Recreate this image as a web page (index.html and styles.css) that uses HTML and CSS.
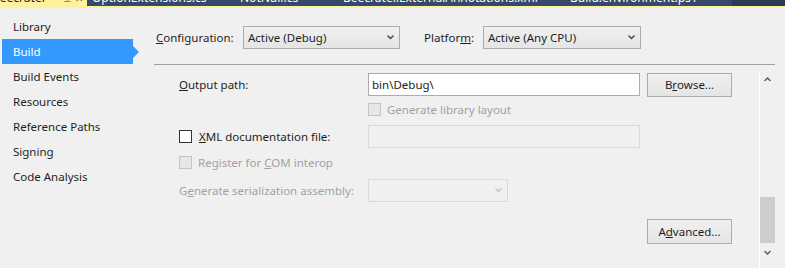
FILE: index.html
```html
<!DOCTYPE html>
<html>
<head>
<meta charset="utf-8">
<link rel="stylesheet" href="styles.css">
</head>
<body>
<div class="tabstrip">
  <div class="tabs">
    <div class="tab tab-active"><span class="tab-title">Beecrater</span><span class="tab-icons">&#x22A5; &#x2715;</span></div>
    <div class="tab tab-2">OptionExtensions.cs</div>
    <div class="tab tab-3">NotNull.cs</div>
    <div class="tab tab-4">Beecrater.ExternalAnnotations.xml</div>
    <div class="tab tab-5">Build.environment.ps1</div>
    <div class="tab tab-rest"></div>
  </div>
</div>
<div class="main">
  <nav class="nav">
    <div class="nav-item">Library</div>
    <div class="nav-item active">Build</div>
    <div class="nav-item">Build Events</div>
    <div class="nav-item">Resources</div>
    <div class="nav-item">Reference Paths</div>
    <div class="nav-item">Signing</div>
    <div class="nav-item">Code Analysis</div>
  </nav>
  <section class="content">
    <div class="config-row">
      <span class="config-label"><u>C</u>onfiguration:</span>
      <div class="combo combo-config"><span>Active (Debug)</span><svg class="chev" width="7" height="5" viewBox="0 0 7 5"><path d="M0.5 0.5 L3.5 3.5 L6.5 0.5" fill="none" stroke="#444" stroke-width="1.4"/></svg></div>
      <span class="platform-label">Platfor<u>m</u>:</span>
      <div class="combo combo-platform"><span>Active (Any CPU)</span><svg class="chev" width="7" height="5" viewBox="0 0 7 5"><path d="M0.5 0.5 L3.5 3.5 L6.5 0.5" fill="none" stroke="#444" stroke-width="1.4"/></svg></div>
    </div>
    <div class="divider"></div>
    <div class="scroll-area">
      <div class="panel">
        <span class="label"><u>O</u>utput path:</span>
        <div class="textbox">bin\Debug\</div>
        <div class="button">B<u>r</u>owse...</div>

        <span></span>
        <label class="check disabled"><span class="box"></span>Generate library layout</label>
        <span></span>

        <label class="check"><span class="box"></span><span><u>X</u>ML documentation file:</span></label>
        <div class="textbox textbox-disabled"></div>
        <span></span>

        <label class="check disabled span2"><span class="box"></span><span>Register for <u>C</u>OM interop</span></label>
        <span></span>

        <span class="label disabled-text">G<u>e</u>nerate serialization assembly:</span>
        <div class="combo combo-disabled"><svg class="chev" width="7" height="5" viewBox="0 0 7 5"><path d="M0.5 0.5 L3.5 3.5 L6.5 0.5" fill="none" stroke="#c4c4c4" stroke-width="1.4"/></svg></div>
        <span></span>

        <span></span>
        <span></span>
        <div class="button button-adv">A<u>d</u>vanced...</div>
      </div>
      <div class="scrollbar">
        <div class="sb-btn"><svg width="7" height="5" viewBox="0 0 7 5"><path d="M0.5 4 L3.5 1 L6.5 4" fill="none" stroke="#606060" stroke-width="1.5"/></svg></div>
        <div class="sb-track"><div class="sb-thumb"></div></div>
        <div class="sb-btn"><svg width="7" height="5" viewBox="0 0 7 5"><path d="M0.5 1 L3.5 4 L6.5 1" fill="none" stroke="#606060" stroke-width="1.5"/></svg></div>
      </div>
    </div>
  </section>
</div>
</body>
</html>
```
FILE: styles.css
```css
* { box-sizing: border-box; }
html, body {
  margin: 0;
  padding: 0;
  background: #f0f0f0;
  font-family: "Noto Sans", "Open Sans", sans-serif;
  font-size: 11.5px;
  color: #1e1e1e;
  width: 785px;
  height: 268px;
  overflow: hidden;
}
u { text-decoration: underline; text-underline-offset: 1px; }

/* tab strip */
.tabstrip {
  height: 8px;
  background: #35496b;
  border-bottom: 2px solid #fff29d;
  overflow: hidden;
}
.tabs {
  display: flex;
  margin-top: -10px;
  height: 16px;
  line-height: 16px;
  white-space: nowrap;
  font-size: 12px;
}
.tab { color: #ffffff; overflow: hidden; }
.tab-active {
  width: 87px;
  background: #fff29d;
  color: #1e1e1e;
  display: flex;
  justify-content: space-between;
  padding-right: 4px;
}
.tab-title { margin-left: -8px; }
.tab-icons { color: #555; font-size: 10px; }
.tab-2 { width: 153px; padding-left: 5px; }
.tab-3 { width: 103px; }
.tab-4 { width: 227px; }
.tab-5 { width: 162px; }
.tab-rest { flex: 1; background: #2b3a56; }

.main { display: flex; }

/* nav */
.nav {
  width: 154px;
  flex: none;
  padding-top: 6px;
}
.nav-item {
  position: relative;
  height: 25px;
  line-height: 25px;
  width: 131px;
  margin-left: 2px;
  padding-left: 11px;
}
.nav-item.active {
  background: #3399ff;
  color: #ffffff;
}
.nav-item.active::after {
  content: "";
  position: absolute;
  right: -6px;
  top: 7px;
  border-left: 6px solid #3399ff;
  border-top: 6px solid transparent;
  border-bottom: 6px solid transparent;
}

/* content */
.content {
  width: 621px;
  display: flex;
  flex-direction: column;
}
.config-row {
  display: flex;
  align-items: center;
  padding-top: 18px;
  padding-left: 2px;
}
.config-label { width: 87px; }
.platform-label { width: 59px; margin-left: 24px; }

.combo {
  height: 23px;
  border: 1px solid #acacac;
  background: linear-gradient(#f0f0f0, #e5e5e5);
  display: flex;
  align-items: center;
  justify-content: space-between;
  padding: 0 5px 0 4px;
}
.combo-config { width: 157px; }
.combo-platform { width: 158px; }
.combo-disabled {
  width: 140px;
  background: #f0f0f0;
  border-color: #d9d9d9;
  justify-content: flex-end;
}

.divider {
  height: 1px;
  background: #a0a0a0;
  margin-top: 15px;
}

.scroll-area {
  display: flex;
  height: 203px;
}
.panel {
  flex: 1;
  display: grid;
  grid-template-columns: 182px 272px 85px;
  grid-template-rows: 25px 24px 31px 21px 35px auto;
  column-gap: 7px;
  align-items: center;
  align-content: start;
  padding-top: 7px;
  padding-left: 25px;
}
.label { white-space: nowrap; }
.disabled-text, .disabled { color: #a2a2a2; }

.textbox {
  height: 23px;
  border: 1px solid #acacac;
  background: #ffffff;
  padding-left: 3px;
  line-height: 21px;
}
.textbox-disabled {
  background: #f0f0f0;
  border-color: #d9d9d9;
}
.button {
  height: 24px;
  border: 1px solid #acacac;
  background: linear-gradient(#f0f0f0, #e5e5e5);
  display: flex;
  align-items: center;
  justify-content: center;
}
.button-adv { margin-top: 11px; height: 25px; }

.check {
  display: flex;
  align-items: center;
  gap: 7px;
  white-space: nowrap;
}
.check .box {
  width: 13px;
  height: 13px;
  border: 1px solid #333333;
  background: #ffffff;
  flex: none;
}
.check.disabled { gap: 6px; }
.check.disabled .box {
  border-color: #c4c4c4;
  background: #e6e6e6;
}
.span2 { grid-column: span 2; }

/* scrollbar */
.scrollbar {
  width: 16px;
  margin-top: 6px;
  border-left: 1px solid #ffffff;
  display: flex;
  flex-direction: column;
  padding-bottom: 7px;
}
.sb-btn {
  height: 17px;
  display: flex;
  align-items: center;
  justify-content: center;
}
.sb-track {
  flex: 1;
  display: flex;
  flex-direction: column;
  justify-content: flex-end;
  padding-bottom: 1px;
}
.sb-thumb {
  height: 46px;
  background: #cdcdcd;
}
```
